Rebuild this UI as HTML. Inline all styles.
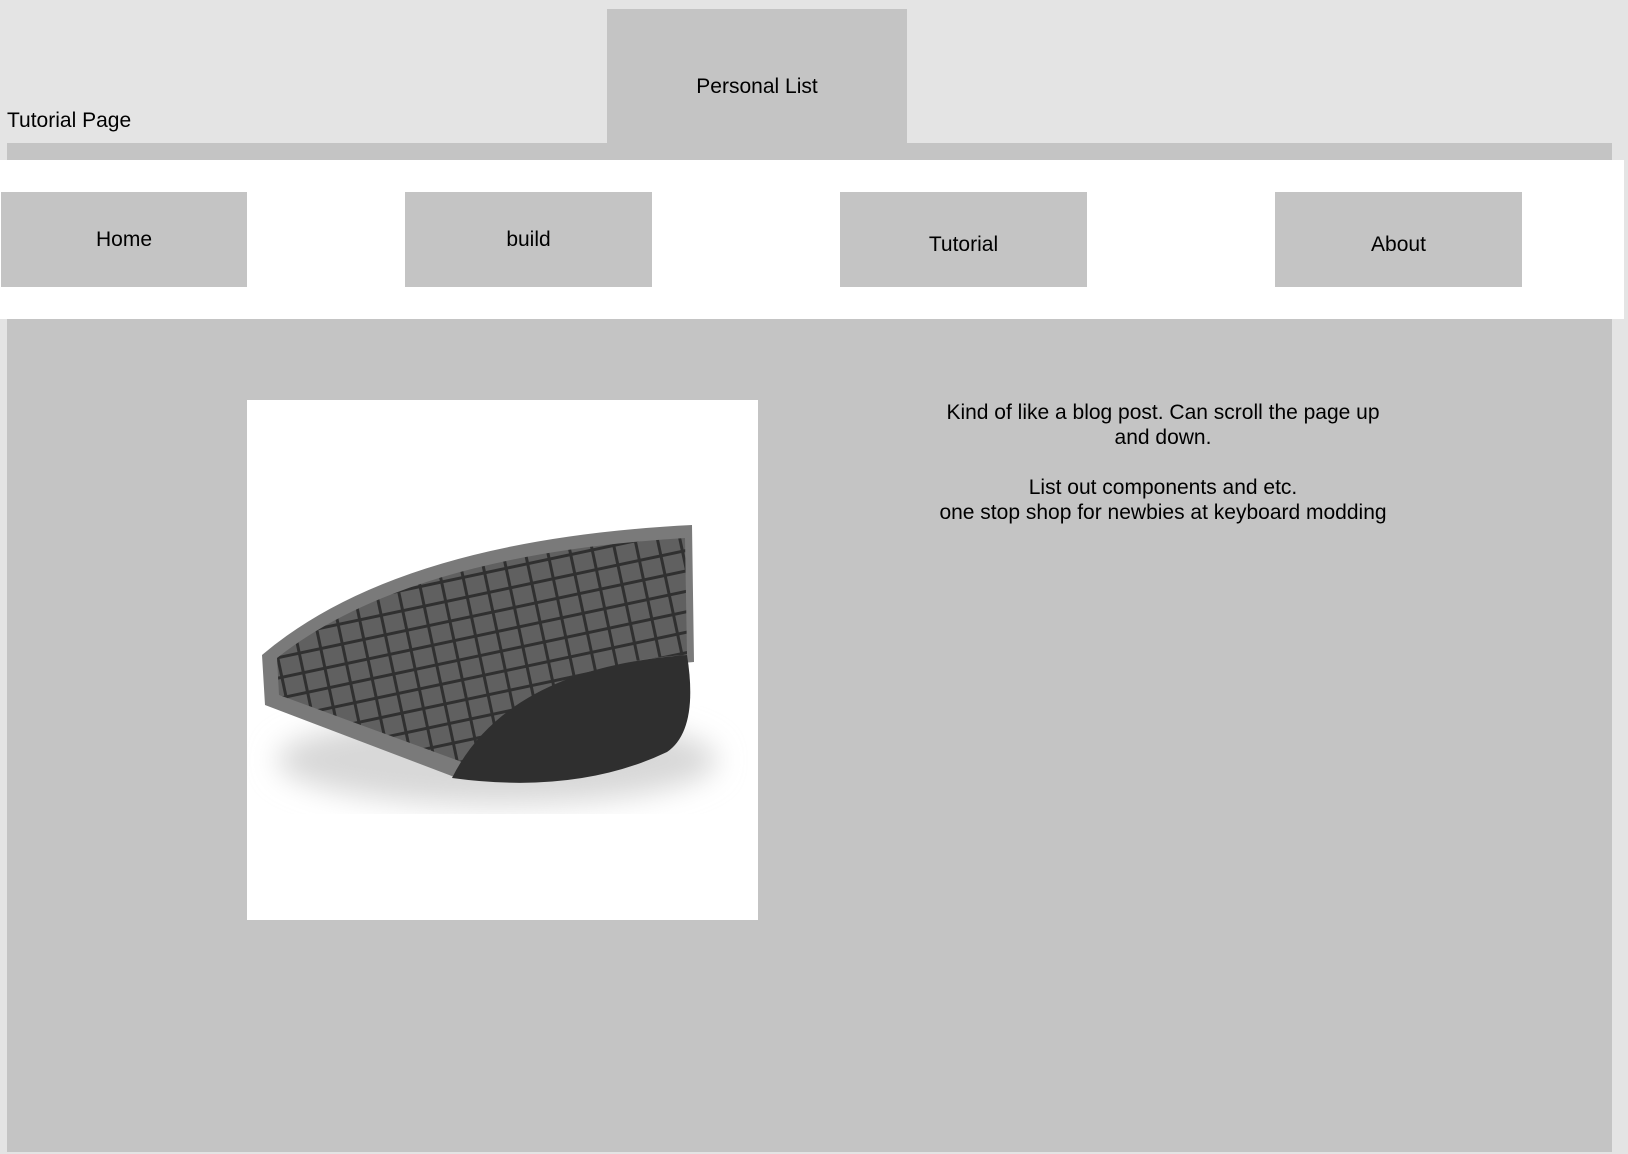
<!DOCTYPE html>
<html><head><meta charset="utf-8"><style>
html,body{margin:0;padding:0}
body{width:1628px;height:1154px;background:#e4e4e4;position:relative;overflow:hidden;font-family:"Liberation Sans",Roboto,sans-serif;color:#000}
.abs{position:absolute}
.btn{position:absolute;background:#c4c4c4;display:flex;align-items:center;justify-content:center;font-size:21px}
</style></head><body>
<div class="abs" style="left:7px;top:143px;width:1605px;height:1009px;background:#c4c4c4"></div>
<div class="abs" style="left:7px;top:109px;font-size:21px">Tutorial Page</div>
<div class="btn" style="left:607px;top:9px;width:300px;height:152px;padding-top:4px;box-sizing:border-box">Personal List</div>
<div class="abs" style="left:0;top:160px;width:1624px;height:159px;background:#fff"></div>
<div class="btn" style="left:1px;top:192px;width:246px;height:95px">Home</div>
<div class="btn" style="left:405px;top:192px;width:247px;height:95px">build</div>
<div class="btn" style="left:840px;top:192px;width:247px;height:95px;padding-top:10px;box-sizing:border-box">Tutorial</div>
<div class="btn" style="left:1275px;top:192px;width:247px;height:95px;padding-top:10px;box-sizing:border-box">About</div>
<div class="abs" style="left:247px;top:400px;width:511px;height:520px;background:#fff">
<svg width="511" height="520" viewBox="0 0 511 520">
<defs><filter id="b"><feGaussianBlur stdDeviation="14"/></filter>
<pattern id="k" width="22" height="20" patternUnits="userSpaceOnUse" patternTransform="rotate(-12)"><rect width="22" height="20" fill="#606060"/><rect x="19" width="3" height="20" fill="#303030"/><rect y="17" width="22" height="3" fill="#303030"/></pattern></defs>
<ellipse cx="250" cy="360" rx="220" ry="45" fill="#d8d8d8" filter="url(#b)"/>
<path d="M15,255 Q150,140 445,125 L447,262 Q300,272 210,378 L18,305 Z" fill="#7a7a7a"/>
<path d="M30,258 Q160,155 438,138 L440,255 Q300,262 215,362 L32,295 Z" fill="url(#k)"/>
<path d="M205,378 Q260,268 440,255 Q452,330 420,352 Q330,395 205,378 Z" fill="#2f2f2f"/>
</svg>
</div>
<div class="abs" style="left:928px;top:400px;width:470px;text-align:center;font-size:21px;line-height:25px">Kind of like a blog post. Can scroll the page up and down.<br><br>List out components and etc.<br>one stop shop for newbies at keyboard modding</div>
</body></html>
